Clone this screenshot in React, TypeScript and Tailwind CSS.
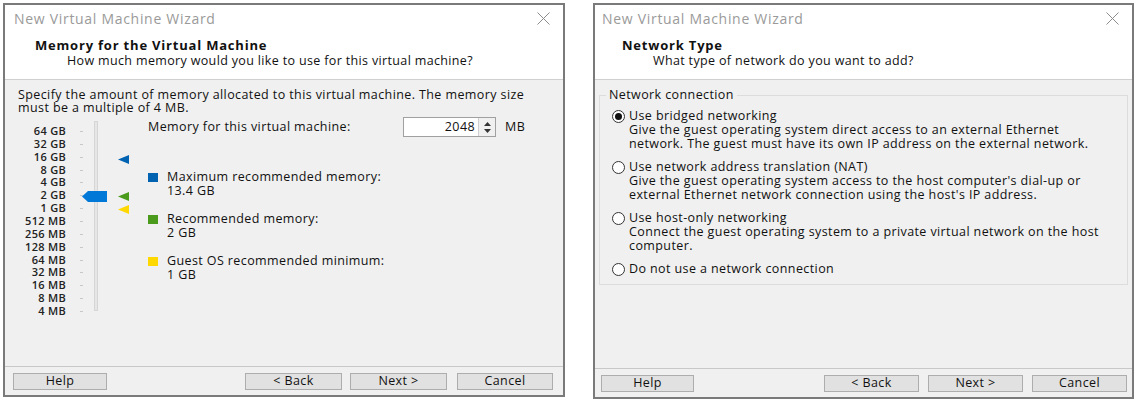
import React from "react";

const font = { fontFamily: '"Open Sans", "DejaVu Sans", sans-serif' };

const sizes = [
  "64 GB",
  "32 GB",
  "16 GB",
  "8 GB",
  "4 GB",
  "2 GB",
  "1 GB",
  "512 MB",
  "256 MB",
  "128 MB",
  "64 MB",
  "32 MB",
  "16 MB",
  "8 MB",
  "4 MB",
];

function CloseX() {
  return (
    <svg width="13" height="13" viewBox="0 0 13 13" className="text-[#8c8c8c]">
      <path d="M0.5 0.5 L12.5 12.5 M12.5 0.5 L0.5 12.5" stroke="currentColor" strokeWidth="1" />
    </svg>
  );
}

function Btn({ label, className = "" }: { label: string; className?: string }) {
  return (
    <div
      className={`h-[17px] border border-[#adadad] bg-[#e1e1e1] flex items-center justify-center text-[12.5px] tracking-[0.4px] text-[#111] ${className}`}
    >
      {label}
    </div>
  );
}

interface HeaderProps {
  title: string;
  sub: string;
  titleIndent: string;
  headIndent: string;
  subIndent: string;
}

function Header({ title, sub, titleIndent, headIndent, subIndent }: HeaderProps) {
  return (
    <div className="bg-white h-[75px] border-b border-[#d0d0d0]">
      <div className={`flex justify-between items-center ${titleIndent} pr-[13px] pt-[3px]`}>
        <span className="text-[14px] tracking-[0.7px] text-[#9a9a9a]">New Virtual Machine Wizard</span>
        <CloseX />
      </div>
      <div className={`${headIndent} pt-[8px] text-[13px] tracking-[0.8px] font-bold text-[#111] leading-[16px]`}>
        {title}
      </div>
      <div className={`${subIndent} text-[12.5px] tracking-[0.35px] text-[#111] leading-[16px]`}>{sub}</div>
    </div>
  );
}

function Triangle({ color }: { color: string }) {
  return (
    <svg width="11" height="9" viewBox="0 0 11 9">
      <path d="M0 4.5 L11 0 L11 9 Z" fill={color} />
    </svg>
  );
}

function MemoryWindow() {
  return (
    <div className="w-[562px] h-[394px] border-2 border-[#7a7a7a] bg-[#f0f0f0] flex flex-col mt-[3px] ml-[3px]">
      <Header
        title="Memory for the Virtual Machine"
        sub="How much memory would you like to use for this virtual machine?"
        titleIndent="pl-[9px]"
        headIndent="pl-[30px]"
        subIndent="pl-[62px]"
      />
      <div className="flex-1 flex flex-col">
        <p className="pl-[13px] pr-[20px] pt-[8px] text-[12.5px] tracking-[0.4px] leading-[13px] text-[#111]">
          Specify the amount of memory allocated to this virtual machine. The memory size must be a
          multiple of 4 MB.
        </p>
        <div className="flex pt-[11px]">
          <div className="relative flex pl-[13px] w-[138px]">
            <div className="flex flex-col items-end w-[48px]">
              {sizes.map((s) => (
                <div
                  key={s}
                  className="h-[12.86px] text-[11px] tracking-[0.3px] leading-[12.86px] font-semibold text-[#222] whitespace-nowrap"
                >
                  {s}
                </div>
              ))}
            </div>
            <div className="flex flex-col pl-[14px]">
              {sizes.map((s) => (
                <div key={s} className="h-[12.86px] flex items-center">
                  <div className="w-[3px] h-px bg-[#c8c8c8]" />
                </div>
              ))}
            </div>
            <div className="ml-[11px] mt-[-4px] w-[4px] h-[190px] bg-[#e6e6e6] border border-[#d6d6d6]" />
            <div className="absolute left-[77px] top-[66px]">
              <svg width="25" height="11" viewBox="0 0 25 11">
                <path d="M0 5.5 L6 0 L25 0 L25 11 L6 11 Z" fill="#0078d7" />
              </svg>
            </div>
            <div className="absolute left-[113px] top-[30px]">
              <Triangle color="#0063b1" />
            </div>
            <div className="absolute left-[113px] top-[67px]">
              <Triangle color="#4a9a1c" />
            </div>
            <div className="absolute left-[113px] top-[80px]">
              <Triangle color="#ffd800" />
            </div>
          </div>
          <div className="flex-1 text-[12.5px] tracking-[0.4px] text-[#111] pl-[5px]">
            <div className="flex items-center h-[20px] -mt-[8px]">
              <span className="w-[255px]">Memory for this virtual machine:</span>
              <div className="flex h-[20px] border border-[#a0a0a0] bg-white">
                <div className="w-[74px] text-right pr-[3px] leading-[18px]">2048</div>
                <div className="w-[17px] bg-[#f0f0f0] border-l border-[#cfcfcf] flex flex-col items-center justify-center gap-[3px]">
                  <svg width="7" height="4" viewBox="0 0 7 4">
                    <path d="M0 4 L3.5 0 L7 4 Z" fill="#333" />
                  </svg>
                  <svg width="7" height="4" viewBox="0 0 7 4">
                    <path d="M0 0 L3.5 4 L7 0 Z" fill="#333" />
                  </svg>
                </div>
              </div>
              <span className="ml-[9px]">MB</span>
            </div>
            <div className="mt-[33px] flex flex-col gap-[14px]">
              {[
                ["#0063b1", "Maximum recommended memory:", "13.4 GB"],
                ["#4a9a1c", "Recommended memory:", "2 GB"],
                ["#ffd800", "Guest OS recommended minimum:", "1 GB"],
              ].map(([c, a, b]) => (
                <div key={a} className="flex">
                  <div className="w-[10px] h-[9px] mt-[3px]" style={{ backgroundColor: c }} />
                  <div className="pl-[9px] leading-[14px]">
                    <div>{a}</div>
                    <div>{b}</div>
                  </div>
                </div>
              ))}
            </div>
          </div>
        </div>
      </div>
      <div className="border-t border-[#c8c8c8] h-[29px] flex items-center pl-[8px] pr-[10px]">
        <Btn label="Help" className="w-[94px]" />
        <div className="flex-1" />
        <Btn label="< Back" className="w-[97px]" />
        <Btn label="Next >" className="w-[97px] ml-[8px]" />
        <Btn label="Cancel" className="w-[96px] ml-[10px]" />
      </div>
    </div>
  );
}

function Radio({ checked, label, desc }: { checked?: boolean; label: string; desc?: string[] }) {
  return (
    <div className="flex flex-col">
      <div className="flex items-center h-[14px]">
        <div className="w-[13px] h-[13px] rounded-full border border-[#333] bg-white flex items-center justify-center">
          {checked && <div className="w-[7px] h-[7px] rounded-full bg-[#111]" />}
        </div>
        <span className="ml-[4px]">{label}</span>
      </div>
      {desc && (
        <div className="pl-[17px] leading-[14px]">
          {desc.map((d) => (
            <div key={d}>{d}</div>
          ))}
        </div>
      )}
    </div>
  );
}

function NetworkWindow() {
  return (
    <div className="w-[541px] h-[396px] border-2 border-[#7a7a7a] bg-[#f0f0f0] flex flex-col mt-[3px] ml-[28px]">
      <Header
        title="Network Type"
        sub="What type of network do you want to add?"
        titleIndent="pl-[7px]"
        headIndent="pl-[27px]"
        subIndent="pl-[58px]"
      />
      <div className="flex-1 px-[4px] pt-[15px]">
        <div className="relative border border-[#dcdcdc] h-[190px] pt-[13px] pl-[12px] text-[12.5px] tracking-[0.4px] text-[#111] flex flex-col gap-[9px]">
          <span className="absolute left-[6px] -top-[9px] bg-[#f0f0f0] px-[3px] leading-[15px]">Network connection</span>
          <Radio
            checked
            label="Use bridged networking"
            desc={[
              "Give the guest operating system direct access to an external Ethernet",
              "network. The guest must have its own IP address on the external network.",
            ]}
          />
          <Radio
            label="Use network address translation (NAT)"
            desc={[
              "Give the guest operating system access to the host computer's dial-up or",
              "external Ethernet network connection using the host's IP address.",
            ]}
          />
          <Radio
            label="Use host-only networking"
            desc={[
              "Connect the guest operating system to a private virtual network on the host",
              "computer.",
            ]}
          />
          <Radio label="Do not use a network connection" />
        </div>
      </div>
      <div className="border-t border-[#c8c8c8] h-[29px] flex items-center pl-[6px] pr-[5px]">
        <Btn label="Help" className="w-[93px]" />
        <div className="flex-1" />
        <Btn label="< Back" className="w-[95px]" />
        <Btn label="Next >" className="w-[95px] ml-[9px]" />
        <Btn label="Cancel" className="w-[95px] ml-[9px]" />
      </div>
    </div>
  );
}

export default function App() {
  return (
    <div className="w-[1139px] h-[401px] bg-white flex items-start" style={font}>
      <MemoryWindow />
      <NetworkWindow />
    </div>
  );
}
